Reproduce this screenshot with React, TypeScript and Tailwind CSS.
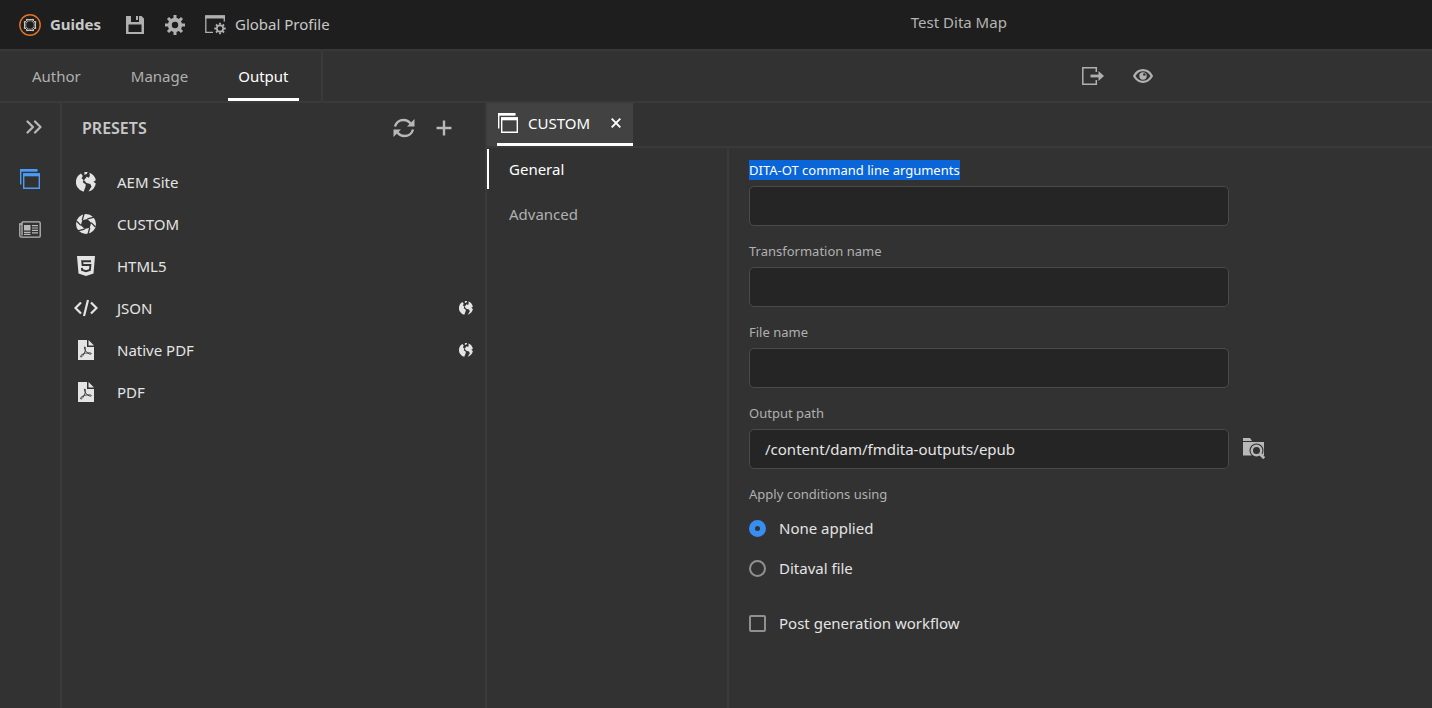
import { useState } from "react";
import type { ReactNode } from "react";

type IconProps = { className?: string };

function GuidesLogo() {
  return (
    <svg viewBox="0 0 22 22" className="size-[22px]" fill="none" aria-hidden="true">
      <circle cx="11" cy="11" r="10.2" stroke="#e0742a" strokeWidth="1.400" />
      <path
        d="M8.500 5.500h5l3 3v5l-3 3h-5l-3-3v-5z"
        stroke="#cfc4bc"
        strokeWidth="1"
        strokeLinejoin="round"
      />
      <circle cx="11" cy="11" r="4.300" stroke="#b5aaa2" strokeWidth="0.900" />
      <g fill="#cfc4bc">
        <circle cx="8" cy="5.700" r="1" />
        <circle cx="14" cy="5.700" r="1" />
        <circle cx="8" cy="16.300" r="1" />
        <circle cx="14" cy="16.300" r="1" />
        <circle cx="5.700" cy="8" r="1" />
        <circle cx="5.700" cy="14" r="1" />
        <circle cx="16.300" cy="8" r="1" />
        <circle cx="16.300" cy="14" r="1" />
      </g>
    </svg>
  );
}

function SaveIcon() {
  return (
    <svg viewBox="0 0 18 18" className="size-[18px]" fill="currentColor" aria-hidden="true">
      <path
        fillRule="evenodd"
        d="M0 0h5v6h8V0h2.500L18 2.500V18H0V0Zm2.500 8.500V16h13V8.500h-13ZM10 0h2v4h-2V0Z"
      />
    </svg>
  );
}

function GearIcon({ className = "" }: IconProps) {
  return (
    <svg viewBox="0 0 20 20" className={className} fill="none" stroke="currentColor" aria-hidden="true">
      <circle cx="10" cy="10" r="5.200" strokeWidth="4" />
      <path
        strokeWidth="3"
        d="M10 0v4M10 16v4M0 10h4M16 10h4M3 3l2.600 2.600M14.400 14.400 17 17M3 17l2.600-2.600M14.400 5.600 17 3"
      />
    </svg>
  );
}

function ProfileIcon() {
  return (
    <svg viewBox="0 0 22 20" className="h-5 w-[22px]" fill="none" stroke="currentColor" aria-hidden="true">
      <path d="M8 17.300H.8V1h18.500v5.500" strokeWidth="1.300" />
      <path d="M0 2h20" strokeWidth="3" />
      <circle cx="15" cy="13.500" r="3.200" strokeWidth="1.700" />
      <path
        strokeWidth="1.900"
        d="M15 7.800v2M15 17.200v2M9.300 13.500h2M18.700 13.500h2M11 9.500l1.400 1.400M17.600 16.100l1.400 1.400M11 17.500l1.400-1.400M17.600 10.900 19 9.500"
      />
    </svg>
  );
}

function PresetIcon({ className = "" }: IconProps) {
  return (
    <svg viewBox="0 0 20 20" className={className} fill="none" stroke="currentColor" aria-hidden="true">
      <path d="M.7 15.500V1.500h16.500" strokeWidth="1.400" />
      <path d="M0 1.300h17.500" strokeWidth="2.600" />
      <path d="M3.700 5h15.600v14.300H3.700z" strokeWidth="1.400" />
      <path d="M3 5.800h17" strokeWidth="3" />
    </svg>
  );
}

function NewsIcon() {
  return (
    <svg viewBox="0 0 22 17" className="h-[17px] w-[22px]" fill="none" stroke="currentColor" aria-hidden="true">
      <path d="M3 3H.8v11.500c0 1 .6 1.700 1.700 1.700H20c.8 0 1.200-.5 1.200-1.200V1.900c0-.7-.4-1.100-1.100-1.100H4C3.300.8 3 1.200 3 2v12.500" strokeWidth="1.300" />
      <path d="M5 4h6.500v5.500H5z" fill="currentColor" stroke="none" />
      <path d="M13 4.600h6M13 7h6M13 9.400h6M5 11.300h6.500M13 11.800h6M5 13.400h6.500" strokeWidth="1.200" />
    </svg>
  );
}

function ChevronsIcon() {
  return (
    <svg viewBox="0 0 16 14" className="h-[14px] w-4" fill="none" stroke="currentColor" strokeWidth="2.200" strokeLinecap="round" strokeLinejoin="round" aria-hidden="true">
      <path d="m1.500 1.500 5.500 5.500-5.500 5.500M9 1.500 14.500 7 9 12.500" />
    </svg>
  );
}

function RefreshIcon() {
  return (
    <svg viewBox="0 0 22 20" className="h-5 w-[22px]" fill="none" stroke="currentColor" strokeWidth="2.400" aria-hidden="true">
      <path d="M2 8.500C3 4.500 6.500 2 10.500 2c3 0 5.300 1.200 7 3.500M20 11.500c-1 4-4.500 6.500-8.500 6.500-3 0-5.300-1.200-7-3.500" />
      <path d="M21.500 1v7.500H14zM.5 19v-7.500H8z" fill="currentColor" stroke="none" />
    </svg>
  );
}

function PlusIcon() {
  return (
    <svg viewBox="0 0 16 16" className="size-4" stroke="currentColor" strokeWidth="2.400" aria-hidden="true">
      <path d="M8 .5v15M.5 8h15" />
    </svg>
  );
}

function CloseIcon() {
  return (
    <svg viewBox="0 0 10 10" className="size-[10px]" stroke="currentColor" strokeWidth="1.900" aria-hidden="true">
      <path d="m.7.7 8.600 8.600M9.300.7.7 9.300" />
    </svg>
  );
}

function ExportIcon() {
  return (
    <svg viewBox="0 0 22 18" className="h-[18px] w-[22px]" fill="none" stroke="currentColor" aria-hidden="true">
      <path d="M14.300 5V.8H.8v16.400h13.500V13" strokeWidth="1.500" />
      <path d="M8.500 9h9" strokeWidth="2.800" />
      <path d="M16.500 4 22 9l-5.500 5z" fill="currentColor" stroke="none" />
    </svg>
  );
}

function EyeIcon() {
  return (
    <svg viewBox="0 0 20 14" className="h-[14px] w-5" fill="none" stroke="currentColor" aria-hidden="true">
      <path d="M1.200 7C3.300 3.200 6.300 1.200 10 1.200S16.700 3.200 18.800 7c-2.100 3.800-5.100 5.800-8.800 5.800S3.300 10.800 1.200 7Z" strokeWidth="2.300" />
      <circle cx="10" cy="7" r="3.700" fill="currentColor" stroke="none" />
      <circle cx="11.300" cy="5.500" r="1.300" fill="#323232" stroke="none" />
    </svg>
  );
}

function EarthIcon({ className = "" }: IconProps) {
  return (
    <svg viewBox="0 0 20 20" className={className} fill="currentColor" aria-hidden="true">
      <path d="M5 1.500 6.800 4l-1.300 2.300L7.500 8l-.7 2.200 3 2.200-.3 2.400L7.600 19.800A10 10 0 0 1 .2 7.800C.8 5 2.600 2.800 5 1.500Z" />
      <path d="M8.500.1a10 10 0 0 1 3.200 0l-1 2-2.400.7zM13.500.7a10 10 0 0 1 6.300 7.600l-2.300 1.400 2.300 1.900a10 10 0 0 1-7.300 8l3-5-1.200-2.500-3.800-1L8 8.200l2.800-3.500 2.200 1 .8-2z" />
    </svg>
  );
}

function ApertureIcon() {
  return (
    <svg viewBox="0 0 20 20" className="size-5" aria-hidden="true">
      <circle cx="10" cy="10" r="10" fill="currentColor" />
      <g transform="rotate(15 10 10)">
        <path d="m10 4.700 4.600 2.650v5.300L10 15.300l-4.600-2.650v-5.300z" fill="#323232" />
        <path
          d="M10 4.700 17 .65M14.600 7.350l5.400 3.150M14.600 12.650V20M10 15.300l-7 4M5.400 12.650 0 9.500M5.400 7.350V0"
          stroke="#323232"
          strokeWidth="1.300"
        />
      </g>
    </svg>
  );
}

function Html5Icon() {
  return (
    <svg viewBox="0 0 18 20" className="h-5 w-[18px]" aria-hidden="true">
      <path d="M0 0h18l-1.500 17.500L9 20l-7.500-2.500z" fill="currentColor" />
      <path d="M14 5.200H5.200L5.600 9h7.800l-.5 5L9 15.200 5.100 14l-.2-2.200" fill="none" stroke="#323232" strokeWidth="1.900" />
    </svg>
  );
}

function CodeIcon() {
  return (
    <svg viewBox="0 0 24 18" className="h-[18px] w-6" fill="none" stroke="currentColor" strokeWidth="2.200" aria-hidden="true">
      <path d="M7 3.500 1.500 9 7 14.500M17 3.500 22.500 9 17 14.500M14 1l-4 16" />
    </svg>
  );
}

function PdfIcon() {
  return (
    <svg viewBox="0 0 16 20" className="h-5 w-4" aria-hidden="true">
      <path d="M0 0h9v7h7v13H0z" fill="currentColor" />
      <path d="M10.500 0 16 5.500h-5.500z" fill="currentColor" />
      <path
        d="M6.500 7c1.600-.3 1.200 2.800.3 5-1 2.400-2.600 5-3.700 5-1.500 0-.6-2 2.400-3.200 2.500-1 7.500-1.500 7.800-.3.200 1.300-2.900.6-4.700-1.400C7.200 10.600 6 8.500 6.500 7Z"
        fill="none"
        stroke="#323232"
        strokeWidth="0.900"
      />
    </svg>
  );
}

function BrowseIcon() {
  return (
    <svg viewBox="0 0 22 21" className="h-[21px] w-[22px]" aria-hidden="true">
      <path d="M0 0h7l2 3H0zM0 4h21v13.500H0z" fill="currentColor" />
      <circle cx="13.500" cy="12.500" r="7" fill="#323232" />
      <circle cx="13.500" cy="12.500" r="4.700" fill="none" stroke="currentColor" strokeWidth="2.400" />
      <path d="m17 16 4.200 4.200" stroke="currentColor" strokeWidth="2.800" />
    </svg>
  );
}

type Preset = { name: string; icon: ReactNode; global?: boolean };

const presets: Preset[] = [
  { name: "AEM Site", icon: <EarthIcon className="size-5" /> },
  { name: "CUSTOM", icon: <ApertureIcon /> },
  { name: "HTML5", icon: <Html5Icon /> },
  { name: "JSON", icon: <CodeIcon />, global: true },
  { name: "Native PDF", icon: <PdfIcon />, global: true },
  { name: "PDF", icon: <PdfIcon /> },
];

const views = ["Author", "Manage", "Output"];

function TopBar() {
  return (
    <header className="flex h-[51px] items-center border-b-2 border-[#383838] bg-[#1e1e1e] pl-[19px] text-[15px] text-[#c8c8c8]">
      <GuidesLogo />
      <span className="ml-[9px] w-[76px] font-bold">Guides</span>
      <button aria-label="Save" className="text-[#b0b0b0]">
        <SaveIcon />
      </button>
      <button aria-label="Settings" className="ml-[21px] text-[#b0b0b0]">
        <GearIcon className="size-5" />
      </button>
      <button className="ml-5 flex items-center gap-2">
        <span className="text-[#b0b0b0]">
          <ProfileIcon />
        </span>
        Global Profile
      </button>
      <h1 className="flex-1 pb-1 pl-[156px] text-center text-[#b4b4b4]">Test Dita Map</h1>
    </header>
  );
}

function ViewBar() {
  return (
    <div className="flex h-[52px] items-stretch border-b-2 border-[#3a3a3a] text-[#b0b0b0]">
      <nav className="flex w-[323px] gap-[30px] border-r-2 border-[#3a3a3a] pl-[22px]">
        {views.map((v) => (
          <a
            key={v}
            href="#"
            className={`flex items-center border-b-3 px-[10px] pt-1 text-[15px] ${
              v === "Output" ? "border-white text-white" : "border-transparent"
            }`}
          >
            {v}
          </a>
        ))}
      </nav>
      <div className="flex flex-1 items-center justify-end gap-[29px] pr-[279px]">
        <button aria-label="Export">
          <ExportIcon />
        </button>
        <button aria-label="Preview">
          <EyeIcon />
        </button>
      </div>
    </div>
  );
}

function Rail() {
  return (
    <aside className="flex w-[62px] shrink-0 flex-col items-center border-r-2 border-[#3a3a3a] pt-[17px] text-[#b8b8b8]">
      <button aria-label="Expand" className="ml-2">
        <ChevronsIcon />
      </button>
      <button aria-label="Presets" className="mt-[35px] text-[#4b9cf5]">
        <PresetIcon className="size-5" />
      </button>
      <button aria-label="Reports" className="mt-8">
        <NewsIcon />
      </button>
    </aside>
  );
}

function PresetPanel() {
  return (
    <section className="w-[425px] shrink-0 border-r-2 border-[#3a3a3a]">
      <div className="flex h-[50px] items-center pr-[33px] pl-5 text-[#b8b8b8]">
        <h2 className="flex-1 text-base font-semibold text-[#c8c8c8]">PRESETS</h2>
        <button aria-label="Refresh">
          <RefreshIcon />
        </button>
        <button aria-label="Add preset" className="ml-[21px]">
          <PlusIcon />
        </button>
      </div>
      <ul className="pt-2">
        {presets.map((p) => (
          <li key={p.name}>
            <button className="flex h-[42px] w-full items-center pr-3 pl-[11px] text-left text-[15px] text-[#e4e4e4]">
              <span className="mr-[18px] flex w-[26px] justify-center">{p.icon}</span>
              <span className="flex-1">{p.name}</span>
              {p.global && <EarthIcon className="size-[14px]" />}
            </button>
          </li>
        ))}
      </ul>
    </section>
  );
}

function TextField({ id, label, value, selected }: { id: string; label: string; value?: string; selected?: boolean }) {
  return (
    <div className="h-[81px]">
      <label htmlFor={id} className={`block h-5 w-fit text-[13px] leading-5 ${selected ? "bg-[#0a66d8] text-white" : "text-[#b0b0b0]"}`}>
        {label}
      </label>
      <input
        id={id}
        type="text"
        defaultValue={value}
        className="mt-[6px] block h-10 w-full rounded-[5px] border border-[#4a4a4a] bg-[#252525] px-[15px] text-[15px] text-[#e4e4e4]"
      />
    </div>
  );
}

function GeneralForm() {
  const [condition, setCondition] = useState("none");
  const radio =
    "size-[17px] appearance-none rounded-full border-2 border-[#909090] checked:border-[6px] checked:border-[#378ef0]";

  return (
    <form className="flex-1 pt-3 pl-5">
      <div className="flex items-start">
        <div className="w-[480px]">
          <TextField id="args" label="DITA-OT command line arguments" selected />
          <TextField id="transformation" label="Transformation name" />
          <TextField id="file" label="File name" />
          <TextField id="path" label="Output path" value="/content/dam/fmdita-outputs/epub" />
        </div>
        <button type="button" aria-label="Browse" className="mt-[278px] ml-[14px] text-[#b8b8b8]">
          <BrowseIcon />
        </button>
      </div>
      <fieldset>
        <legend className="text-[13px] leading-5 text-[#b0b0b0]">Apply conditions using</legend>
        <label className="mt-1 flex h-10 items-center gap-[13px] text-[15px] text-[#e4e4e4]">
          <input type="radio" name="condition" className={radio} checked={condition === "none"} onChange={() => setCondition("none")} />
          None applied
        </label>
        <label className="flex h-10 items-center gap-[13px] text-[15px] text-[#e4e4e4]">
          <input type="radio" name="condition" className={radio} checked={condition === "ditaval"} onChange={() => setCondition("ditaval")} />
          Ditaval file
        </label>
      </fieldset>
      <label className="mt-[15px] flex h-10 items-center gap-[13px] text-[15px] text-[#e4e4e4]">
        <input type="checkbox" className="size-[17px] appearance-none rounded-[2px] border-2 border-[#909090] checked:bg-[#378ef0]" />
        Post generation workflow
      </label>
    </form>
  );
}

function Editor() {
  return (
    <main className="flex min-w-0 flex-1 flex-col">
      <div className="h-[45px] border-b-2 border-[#3a3a3a]">
        <div className="flex h-[43px] w-[146px] bg-[#424242] pl-[10px] text-white">
          <div className="flex flex-1 items-center border-b-3 border-white pl-px">
            <PresetIcon className="size-5" />
            <span className="ml-[10px] flex-1 text-[15px]">CUSTOM</span>
            <button aria-label="Close tab" className="mr-3">
              <CloseIcon />
            </button>
          </div>
        </div>
      </div>
      <div className="flex flex-1">
        <nav className="flex w-[242px] shrink-0 flex-col gap-[5px] border-r-2 border-[#3a3a3a] pt-px">
          <a href="#" className="flex h-10 items-center border-l-2 border-white pl-5 text-[15px] text-white">
            General
          </a>
          <a href="#" className="flex h-10 items-center border-l-2 border-transparent pl-5 text-[15px] text-[#b0b0b0]">
            Advanced
          </a>
        </nav>
        <GeneralForm />
      </div>
    </main>
  );
}

export default function App() {
  return (
    <div className="flex min-h-screen flex-col bg-[#323232] font-['Noto_Sans',sans-serif]">
      <TopBar />
      <ViewBar />
      <div className="flex flex-1">
        <Rail />
        <PresetPanel />
        <Editor />
      </div>
    </div>
  );
}
